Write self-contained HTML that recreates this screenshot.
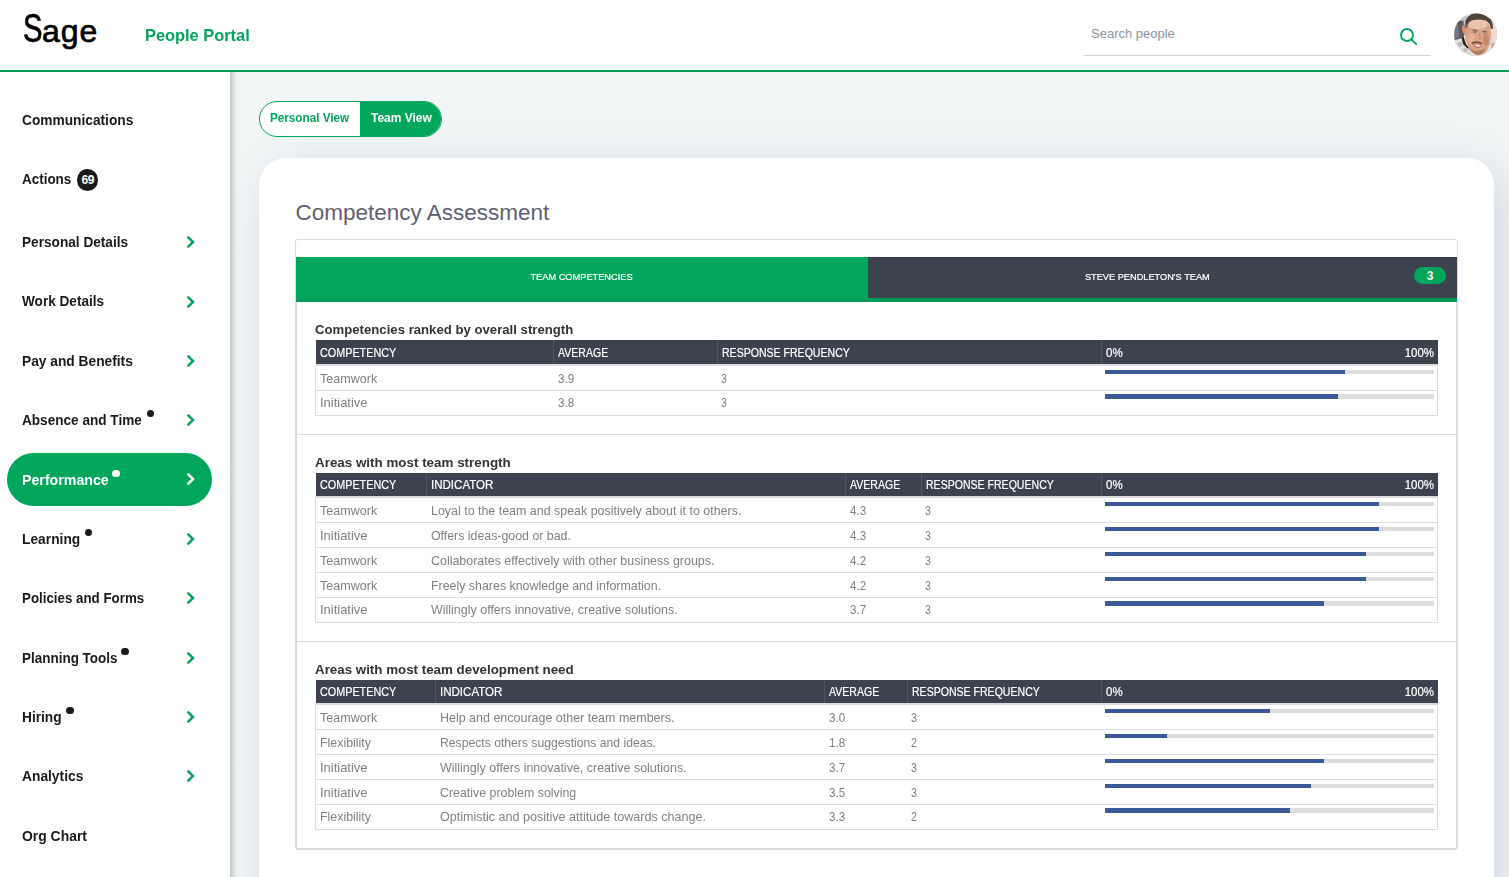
<!DOCTYPE html>
<html lang="en">
<head>
<meta charset="utf-8">
<title>People Portal - Competency Assessment</title>
<style>
*{box-sizing:border-box;margin:0;padding:0}
html,body{width:1509px;height:877px;overflow:hidden}
body{position:relative;background:#f2f5f6;font-family:"Liberation Sans",sans-serif;color:#1a1a1a}
.sx{display:inline-block;white-space:nowrap;transform-origin:0 50%}

/* ---------- header ---------- */
#hdr{position:absolute;left:0;top:0;width:1509px;height:72px;background:linear-gradient(to bottom,rgba(0,0,0,0) 0,rgba(0,0,0,0) 62px,rgba(40,60,50,.035) 69px,rgba(0,0,0,0) 70px) #fff;border-bottom:2px solid #009f57;z-index:5}
#logo{position:absolute;left:22.8px;top:5px;height:46px;line-height:46px;font-size:32px;letter-spacing:1px;color:#000;white-space:nowrap;font-weight:400;-webkit-text-stroke:.7px #000}
#logo .s1{display:inline-block;font-size:40px;letter-spacing:0;transform:scaleX(.73);transform-origin:0 50%;margin-right:-7.5px}
#portal{position:absolute;left:145px;top:25px;font-size:17px;line-height:22px;font-weight:700;color:#00a65c}
#portal .sx{transform:scaleX(.964)}
#search{position:absolute;left:1084px;top:14px;width:347px;height:42px;border-bottom:1px solid #ccd4d8}
#search .ph{position:absolute;left:7px;top:11px;font-size:13px;line-height:18px;color:#8b959e}
#search svg{position:absolute;left:314px;top:12px}
#avatar{position:absolute;left:1454px;top:13px;width:43px;height:43px;border-radius:50%;overflow:hidden;background:#c9a58e}

/* ---------- sidebar ---------- */
#side{position:absolute;left:0;top:72px;width:230px;height:805px;background:#fff;z-index:3}
#sideshadow{position:absolute;left:230px;top:72px;width:12px;height:805px;z-index:4;
 background:linear-gradient(to right,rgba(40,55,62,0.25) 0px,rgba(40,55,62,0.21) 1px,rgba(40,55,62,0.165) 2px,rgba(40,55,62,0.123) 3px,rgba(40,55,62,0.088) 4px,rgba(40,55,62,0.057) 5px,rgba(40,55,62,0.035) 6px,rgba(40,55,62,0.017) 7px,rgba(40,55,62,0.005) 8px,rgba(40,55,62,0) 9px)}
.nav{position:absolute;left:21.6px;height:20px;line-height:20px;font-size:15px;font-weight:700;color:#1a1a1a;white-space:nowrap}
.nav .sx{transform:scaleX(.912)}
.nav.act{color:#fff}
.chev{position:absolute;left:185px;width:12px;height:16px}
.dot{position:absolute;width:7.2px;height:7.2px;margin:.1px 0 0 .1px;border-radius:50%;background:#1a1a1a}
#pill{position:absolute;left:7px;top:381px;width:205px;height:53px;border-radius:27px;background:#00a65c}
#badge{position:absolute;left:77px;top:97.2px;width:21.4px;height:21.6px;border-radius:50%;background:#1a1a1a;color:#fff;font-size:12px;font-weight:700;line-height:22px;text-align:center;letter-spacing:-.6px}

/* ---------- main ---------- */
#viewtabs{position:absolute;left:259px;top:101px;width:183px;height:36px;border-radius:18px;border:1px solid #00a65c;background:#fff;overflow:hidden;z-index:2}
#viewtabs .a{position:absolute;left:0;top:0;width:100px;height:34px;line-height:31px;font-size:13px;font-weight:700;color:#00a65c;padding-left:9.5px}
#viewtabs .b{position:absolute;left:100px;top:-1px;width:83px;height:36px;line-height:33px;font-size:13px;font-weight:700;color:#fff;background:#00a65c;padding-left:10.5px}
#viewtabs .sx{transform:scaleX(.9)}
#viewtabs .b .sx{transform:scaleX(.922)}
#card{position:absolute;left:259px;top:158px;width:1235px;height:800px;border-radius:27px;background:#fff;box-shadow:10px 10px 48px rgba(0,28,67,.12);z-index:1}
#title{position:absolute;left:295.5px;top:198px;font-size:22.5px;line-height:30px;color:#5d6173;z-index:2;white-space:nowrap}
#panel{position:absolute;left:295px;top:239px;width:1163px;height:611px;border:1px solid #ddd;border-radius:3px;background:#fff;z-index:2}
#pbody{position:absolute;left:0;top:62px;width:1161px;height:547px;border:1px solid #d9d9d9;border-top:0}

/* ---------- panel internals (origin = 296,240) ---------- */
#ptabs{position:absolute;left:0;top:17px;width:1161px;height:45px}
.pt{position:absolute;top:0;height:45px;border-bottom:4px solid #009b56;font-size:9.5px;line-height:40px;-webkit-text-stroke:.2px #fff;color:#fff;text-align:center;white-space:nowrap}
.pt .sx{transform:scaleX(.887);transform-origin:50% 50%}
.pt.on{left:0;width:572px;background:#00a65c}
.pt.off{left:572px;width:589px;background:#3d434e;border-top:1px solid #343a46;line-height:38px;padding-right:30.5px}
.pt.off b{position:absolute;right:11px;top:9px;width:32px;height:17px;border-radius:8.5px;background:#00a65c;color:#fff;font-size:12px;line-height:18px;font-weight:700;text-align:center;-webkit-text-stroke:0}
.st{position:absolute;left:18.8px;margin-top:1px;font-size:13.5px;line-height:18px;font-weight:700;color:#333;white-space:nowrap}
.st .sx{transform:scaleX(.976)}
.hr{position:absolute;left:0;width:1161px;height:1px;background:#ddd}
table.ct{position:absolute;left:19px;width:1123px;border-collapse:separate;border-spacing:0;table-layout:fixed}
.ct th{position:relative;background:linear-gradient(#50565f,#50565f) 0 0/1px 100% no-repeat,#3d434e;background-clip:padding-box;color:#fff;font-weight:400;font-size:12.5px;line-height:16px;text-align:left;vertical-align:top;padding:5px 0 0 5px;border-bottom:2px solid #ddd;white-space:nowrap}
.ct th:first-child{border-left:1px solid transparent;padding-left:4px;background:#3d434e;background-clip:padding-box}
.ct th .sx{transform:scaleX(.862);-webkit-text-stroke:.2px #fff}
.ct th .sx.r{position:absolute;right:4px;top:5px;transform-origin:100% 50%}
.ct.t2 th,.ct.t3 th{padding-top:4px}
.ct.t2 th .sx.r,.ct.t3 th .sx.r{top:4px}
.ct td{height:25px;font-size:13.5px;line-height:16px;color:#808080;vertical-align:top;padding:5px 0 0 5px;border-bottom:1px solid #ddd;white-space:nowrap}
.ct td:first-child{border-left:1px solid #ddd;padding-left:4px}
.ct td:last-child{border-right:1px solid #ddd}
.ct td .sx{transform:scaleX(.927)}
.ct td.bc{padding:4px 0 0 4px}
.bar{width:329px;height:4px;background:#ddd}
.bar i{display:block;height:100%;background:#3b5998}
.ct tr.last td{padding-top:4px}
.ct tr.last td.bc{padding-top:3px}
.ct tr.last .bar{height:5px}
</style>
</head>
<body>

<div id="hdr">
  <div id="logo"><span class="s1">S</span>age</div>
  <div id="portal"><span class="sx">People Portal</span></div>
  <div id="search">
    <span class="ph">Search people</span>
    <svg width="22" height="22" viewBox="0 0 22 22"><circle cx="9" cy="9" r="6" fill="none" stroke="#00a65c" stroke-width="1.9"/><path d="M13.4 13.4 L18.2 18.2" stroke="#00a65c" stroke-width="1.9" stroke-linecap="round" fill="none"/></svg>
  </div>
  <div id="avatar"><svg width="43" height="43" viewBox="0 0 43 43">
    <defs><filter id="avb" x="-20%" y="-20%" width="140%" height="140%"><feGaussianBlur stdDeviation="0.75"/></filter>
    <clipPath id="avc"><circle cx="21.5" cy="21.5" r="21.5"/></clipPath></defs>
    <g clip-path="url(#avc)">
    <rect width="43" height="43" fill="#efe6df"/>
    <g filter="url(#avb)">
      <rect x="36" y="6" width="8" height="20" fill="#f1dccb"/>
      <rect x="35" y="24" width="5" height="9" fill="#d3def0"/>
      <rect x="37" y="30" width="7" height="8" fill="#e2a888"/>
      <rect x="30" y="36" width="12" height="8" fill="#e4e2e2"/>
      <path d="M4 4 L13 2 L12 9 L3 10 Z" fill="#c9c8c8"/>
      <path d="M-1 9 L9.5 7.5 L10.5 22 L8 26 L-1 29 Z" fill="#5d5b60"/>
      <path d="M-1 12 L4 10 L5 24 L-1 27 Z" fill="#77767b"/>
      <path d="M-2 28 L8 25 L14 33 L22 40 L30 41 L30 46 L-2 46 Z" fill="#dedede"/>
      <path d="M3 30 L7 29 L9 33 L5 34 Z M10 35 L14 36 L13 39 L9 38 Z" fill="#b9b9bb"/>
      <path d="M7.5 24.5 L9.5 23.5 L12 31 L16 36 L13 35 L9 31 Z" fill="#2a211e"/>
      <path d="M11 13 Q10 22 12 28 Q15 38 23 42 Q30 43 34 36 Q37.5 28 37 18 Q36 8 25 5.5 Q13 6 11 13 Z" fill="#d9a486"/>
      <path d="M8 13 Q10 11.5 11.5 13 L11.5 21 Q9 21 8 17 Z" fill="#dd8f6c"/>
      <ellipse cx="24" cy="11.5" rx="9.5" ry="5" fill="#ebc4ad"/>
      <ellipse cx="17" cy="25" rx="3.5" ry="5" fill="#e3b095"/>
      <ellipse cx="32" cy="27" rx="3" ry="6" fill="#c98a6b"/>
      <path d="M10.8 15 Q9.8 5.5 17 1.6 Q25 -1.4 33 2.2 Q39.3 6.2 38.9 16 L36.6 15.5 Q36.5 10 31.5 7.6 Q25 5.4 18 7.2 Q13.5 9 12.8 15 Z" fill="#50423a"/>
      <path d="M12 8 Q12.5 13 12.8 16 L11 15 Z" fill="#8d8079"/>
      <path d="M14 34 Q18 41 24 42 Q30 41 32 34 Q28 38 23 38 Q18 38 14 34 Z" fill="#b17c62"/>
      <path d="M17.5 29.5 Q22 27 28.5 30 L28 31.2 Q22.5 29.3 18 31 Z" fill="#7c5443"/>
      <path d="M19 31 Q23.5 30.2 28 31.6 Q27 35 23.5 35.2 Q20.5 34.5 19 31 Z" fill="#c4616a"/>
      <path d="M20.5 31.6 Q23.8 31 27 32.2 Q26 33.8 23.6 33.8 Q21.6 33.4 20.5 31.6 Z" fill="#fbf3f0"/>
      <path d="M18.5 17.3 Q21 16.2 23.5 17.6 M28.5 18.6 Q31 17.8 33.5 19.2" stroke="#7b5646" stroke-width="1" fill="none"/>
      <ellipse cx="21" cy="19" rx="1.7" ry=".9" fill="#6c6a70"/>
      <ellipse cx="30.8" cy="20.3" rx="1.7" ry=".9" fill="#7c8590"/>
      <path d="M25 20 Q26.5 24 26 27" stroke="#c58d70" stroke-width="1.2" fill="none"/>
    </g>
    </g>
  </svg></div>
</div>

<div id="side">
  <div id="pill"></div>
  <div class="nav" style="top:38px"><span class="sx" style="transform:scaleX(0.915)">Communications</span></div>
  <div class="nav" style="top:97px"><span class="sx" style="transform:scaleX(0.896)">Actions</span></div>
  <div class="nav" style="top:160px"><span class="sx" style="transform:scaleX(0.909)">Personal Details</span></div>
  <svg class="chev" style="top:162.2px" viewBox="0 0 12 16"><polyline points="3.3,3.3 8,8 3.3,12.7" fill="none" stroke="#00a65c" stroke-width="2.5" stroke-linecap="round" stroke-linejoin="miter"/></svg>
  <div class="nav" style="top:219px"><span class="sx" style="transform:scaleX(0.906)">Work Details</span></div>
  <svg class="chev" style="top:221.5px" viewBox="0 0 12 16"><polyline points="3.3,3.3 8,8 3.3,12.7" fill="none" stroke="#00a65c" stroke-width="2.5" stroke-linecap="round" stroke-linejoin="miter"/></svg>
  <div class="nav" style="top:279px"><span class="sx" style="transform:scaleX(0.917)">Pay and Benefits</span></div>
  <svg class="chev" style="top:280.9px" viewBox="0 0 12 16"><polyline points="3.3,3.3 8,8 3.3,12.7" fill="none" stroke="#00a65c" stroke-width="2.5" stroke-linecap="round" stroke-linejoin="miter"/></svg>
  <div class="nav" style="top:338px"><span class="sx" style="transform:scaleX(0.906)">Absence and Time</span></div>
  <svg class="chev" style="top:340.1px" viewBox="0 0 12 16"><polyline points="3.3,3.3 8,8 3.3,12.7" fill="none" stroke="#00a65c" stroke-width="2.5" stroke-linecap="round" stroke-linejoin="miter"/></svg>
  <div class="nav act" style="top:398px"><span class="sx" style="transform:scaleX(0.946)">Performance</span></div>
  <svg class="chev" style="top:399.2px" viewBox="0 0 12 16"><polyline points="3.3,3.3 8,8 3.3,12.7" fill="none" stroke="#fff" stroke-width="2.5" stroke-linecap="round" stroke-linejoin="miter"/></svg>
  <div class="nav" style="top:457px"><span class="sx" style="transform:scaleX(0.920)">Learning</span></div>
  <svg class="chev" style="top:459.0px" viewBox="0 0 12 16"><polyline points="3.3,3.3 8,8 3.3,12.7" fill="none" stroke="#00a65c" stroke-width="2.5" stroke-linecap="round" stroke-linejoin="miter"/></svg>
  <div class="nav" style="top:516px"><span class="sx" style="transform:scaleX(0.888)">Policies and Forms</span></div>
  <svg class="chev" style="top:518.4px" viewBox="0 0 12 16"><polyline points="3.3,3.3 8,8 3.3,12.7" fill="none" stroke="#00a65c" stroke-width="2.5" stroke-linecap="round" stroke-linejoin="miter"/></svg>
  <div class="nav" style="top:576px"><span class="sx" style="transform:scaleX(0.898)">Planning Tools</span></div>
  <svg class="chev" style="top:577.8px" viewBox="0 0 12 16"><polyline points="3.3,3.3 8,8 3.3,12.7" fill="none" stroke="#00a65c" stroke-width="2.5" stroke-linecap="round" stroke-linejoin="miter"/></svg>
  <div class="nav" style="top:635px"><span class="sx" style="transform:scaleX(0.914)">Hiring</span></div>
  <svg class="chev" style="top:637.1px" viewBox="0 0 12 16"><polyline points="3.3,3.3 8,8 3.3,12.7" fill="none" stroke="#00a65c" stroke-width="2.5" stroke-linecap="round" stroke-linejoin="miter"/></svg>
  <div class="nav" style="top:694px"><span class="sx" style="transform:scaleX(0.919)">Analytics</span></div>
  <svg class="chev" style="top:696.1px" viewBox="0 0 12 16"><polyline points="3.3,3.3 8,8 3.3,12.7" fill="none" stroke="#00a65c" stroke-width="2.5" stroke-linecap="round" stroke-linejoin="miter"/></svg>
  <div class="nav" style="top:754px"><span class="sx" style="transform:scaleX(0.928)">Org Chart</span></div>

  <i class="dot" style="left:146.5px;top:337.9px;background:#1a1a1a"></i>
  <i class="dot" style="left:112.4px;top:398.0px;background:#fff"></i>
  <i class="dot" style="left:84.8px;top:456.8px;background:#1a1a1a"></i>
  <i class="dot" style="left:121.3px;top:576.1px;background:#1a1a1a"></i>
  <i class="dot" style="left:66.4px;top:635.1px;background:#1a1a1a"></i>
  <div id="badge">69</div>
</div>
<div id="sideshadow"></div>

<div id="viewtabs"><div class="a"><span class="sx">Personal View</span></div><div class="b"><span class="sx">Team View</span></div></div>
<div id="card"></div>
<div id="title">Competency Assessment</div>
<div id="panel">
<div id="pbody"></div>
<div id="ptabs"><div class="pt on"><span class="sx" style="transform:scaleX(0.973)">TEAM COMPETENCIES</span></div><div class="pt off"><span class="sx" style="transform:scaleX(0.970)">STEVE PENDLETON'S TEAM</span><b>3</b></div></div>
<h4 class="st" style="top:80px"><span class="sx" style="transform:scaleX(0.975)">Competencies ranked by overall strength</span></h4>
<table class="ct t1" style="top:100px">
  <colgroup><col style="width:238px"><col style="width:164px"><col style="width:384px"><col style="width:337px"></colgroup>
  <thead><tr style="height:26px">
    <th><span class="sx" style="transform:scaleX(0.864)">COMPETENCY</span></th>
    <th><span class="sx" style="transform:scaleX(0.843);margin-left:-.4px">AVERAGE</span></th>
    <th><span class="sx" style="transform:scaleX(0.844)">RESPONSE FREQUENCY</span></th>
    <th class="pc"><span class="sx" style="transform:scaleX(0.918)">0%</span><span class="sx r" style="transform:scaleX(0.916)">100%</span></th>
  </tr></thead>
  <tbody>
    <tr>
      <td><span class="sx" style="transform:scaleX(0.930)">Teamwork</span></td>
      <td><span class="sx" style="transform:scaleX(0.857);margin-left:-.4px">3.9</span></td>
      <td><span class="sx" style="transform:scaleX(0.785);margin-left:-1px">3</span></td>
      <td class="bc"><div class="bar"><i style="width:239.9px"></i></div></td>
    </tr>
    <tr class="last">
      <td><span class="sx" style="transform:scaleX(0.959)">Initiative</span></td>
      <td><span class="sx" style="transform:scaleX(0.857);margin-left:-.4px">3.8</span></td>
      <td><span class="sx" style="transform:scaleX(0.785);margin-left:-1px">3</span></td>
      <td class="bc"><div class="bar"><i style="width:233.0px"></i></div></td>
    </tr>
  </tbody>
</table>
<div class="hr" style="top:194px"></div>
<h4 class="st" style="top:213px"><span class="sx" style="transform:scaleX(0.992)">Areas with most team strength</span></h4>
<table class="ct t2" style="top:233px">
  <colgroup><col style="width:111px"><col style="width:419px"><col style="width:76px"><col style="width:180px"><col style="width:337px"></colgroup>
  <thead><tr style="height:25px">
    <th><span class="sx" style="transform:scaleX(0.864)">COMPETENCY</span></th>
    <th><span class="sx" style="transform:scaleX(0.923)">INDICATOR</span></th>
    <th><span class="sx" style="transform:scaleX(0.843);margin-left:-.4px">AVERAGE</span></th>
    <th><span class="sx" style="transform:scaleX(0.844)">RESPONSE FREQUENCY</span></th>
    <th class="pc"><span class="sx" style="transform:scaleX(0.918)">0%</span><span class="sx r" style="transform:scaleX(0.916)">100%</span></th>
  </tr></thead>
  <tbody>
    <tr>
      <td><span class="sx" style="transform:scaleX(0.930)">Teamwork</span></td>
      <td><span class="sx" style="transform:scaleX(0.921)">Loyal to the team and speak positively about it to others.</span></td>
      <td><span class="sx" style="transform:scaleX(0.857);margin-left:-.4px">4.3</span></td>
      <td><span class="sx" style="transform:scaleX(0.785);margin-left:-1px">3</span></td>
      <td class="bc"><div class="bar"><i style="width:274.2px"></i></div></td>
    </tr>
    <tr>
      <td><span class="sx" style="transform:scaleX(0.959)">Initiative</span></td>
      <td><span class="sx" style="transform:scaleX(0.915)">Offers ideas-good or bad.</span></td>
      <td><span class="sx" style="transform:scaleX(0.857);margin-left:-.4px">4.3</span></td>
      <td><span class="sx" style="transform:scaleX(0.785);margin-left:-1px">3</span></td>
      <td class="bc"><div class="bar"><i style="width:274.2px"></i></div></td>
    </tr>
    <tr>
      <td><span class="sx" style="transform:scaleX(0.930)">Teamwork</span></td>
      <td><span class="sx" style="transform:scaleX(0.922)">Collaborates effectively with other business groups.</span></td>
      <td><span class="sx" style="transform:scaleX(0.857);margin-left:-.4px">4.2</span></td>
      <td><span class="sx" style="transform:scaleX(0.785);margin-left:-1px">3</span></td>
      <td class="bc"><div class="bar"><i style="width:260.5px"></i></div></td>
    </tr>
    <tr>
      <td><span class="sx" style="transform:scaleX(0.930)">Teamwork</span></td>
      <td><span class="sx" style="transform:scaleX(0.918)">Freely shares knowledge and information.</span></td>
      <td><span class="sx" style="transform:scaleX(0.857);margin-left:-.4px">4.2</span></td>
      <td><span class="sx" style="transform:scaleX(0.785);margin-left:-1px">3</span></td>
      <td class="bc"><div class="bar"><i style="width:260.5px"></i></div></td>
    </tr>
    <tr class="last">
      <td><span class="sx" style="transform:scaleX(0.959)">Initiative</span></td>
      <td><span class="sx" style="transform:scaleX(0.924)">Willingly offers innovative, creative solutions.</span></td>
      <td><span class="sx" style="transform:scaleX(0.857);margin-left:-.4px">3.7</span></td>
      <td><span class="sx" style="transform:scaleX(0.785);margin-left:-1px">3</span></td>
      <td class="bc"><div class="bar"><i style="width:219.3px"></i></div></td>
    </tr>
  </tbody>
</table>
<div class="hr" style="top:401px"></div>
<h4 class="st" style="top:420px"><span class="sx" style="transform:scaleX(0.988)">Areas with most team development need</span></h4>
<table class="ct t3" style="top:440px">
  <colgroup><col style="width:120px"><col style="width:389px"><col style="width:83px"><col style="width:194px"><col style="width:337px"></colgroup>
  <thead><tr style="height:25px">
    <th><span class="sx" style="transform:scaleX(0.864)">COMPETENCY</span></th>
    <th><span class="sx" style="transform:scaleX(0.923)">INDICATOR</span></th>
    <th><span class="sx" style="transform:scaleX(0.843);margin-left:-.4px">AVERAGE</span></th>
    <th><span class="sx" style="transform:scaleX(0.844)">RESPONSE FREQUENCY</span></th>
    <th class="pc"><span class="sx" style="transform:scaleX(0.918)">0%</span><span class="sx r" style="transform:scaleX(0.916)">100%</span></th>
  </tr></thead>
  <tbody>
    <tr>
      <td><span class="sx" style="transform:scaleX(0.930)">Teamwork</span></td>
      <td><span class="sx" style="transform:scaleX(0.924)">Help and encourage other team members.</span></td>
      <td><span class="sx" style="transform:scaleX(0.857);margin-left:-.4px">3.0</span></td>
      <td><span class="sx" style="transform:scaleX(0.785);margin-left:-1px">3</span></td>
      <td class="bc"><div class="bar"><i style="width:164.5px"></i></div></td>
    </tr>
    <tr>
      <td><span class="sx" style="transform:scaleX(0.917)">Flexibility</span></td>
      <td><span class="sx" style="transform:scaleX(0.902)">Respects others suggestions and ideas.</span></td>
      <td><span class="sx" style="transform:scaleX(0.857);margin-left:-.4px">1.8</span></td>
      <td><span class="sx" style="transform:scaleX(0.785);margin-left:-1px">2</span></td>
      <td class="bc"><div class="bar"><i style="width:61.7px"></i></div></td>
    </tr>
    <tr>
      <td><span class="sx" style="transform:scaleX(0.959)">Initiative</span></td>
      <td><span class="sx" style="transform:scaleX(0.924)">Willingly offers innovative, creative solutions.</span></td>
      <td><span class="sx" style="transform:scaleX(0.857);margin-left:-.4px">3.7</span></td>
      <td><span class="sx" style="transform:scaleX(0.785);margin-left:-1px">3</span></td>
      <td class="bc"><div class="bar"><i style="width:219.3px"></i></div></td>
    </tr>
    <tr>
      <td><span class="sx" style="transform:scaleX(0.959)">Initiative</span></td>
      <td><span class="sx" style="transform:scaleX(0.917)">Creative problem solving</span></td>
      <td><span class="sx" style="transform:scaleX(0.857);margin-left:-.4px">3.5</span></td>
      <td><span class="sx" style="transform:scaleX(0.785);margin-left:-1px">3</span></td>
      <td class="bc"><div class="bar"><i style="width:205.6px"></i></div></td>
    </tr>
    <tr class="last">
      <td><span class="sx" style="transform:scaleX(0.917)">Flexibility</span></td>
      <td><span class="sx" style="transform:scaleX(0.930)">Optimistic and positive attitude towards change.</span></td>
      <td><span class="sx" style="transform:scaleX(0.857);margin-left:-.4px">3.3</span></td>
      <td><span class="sx" style="transform:scaleX(0.785);margin-left:-1px">2</span></td>
      <td class="bc"><div class="bar"><i style="width:185.1px"></i></div></td>
    </tr>
  </tbody>
</table>
</div>

</body>
</html>
